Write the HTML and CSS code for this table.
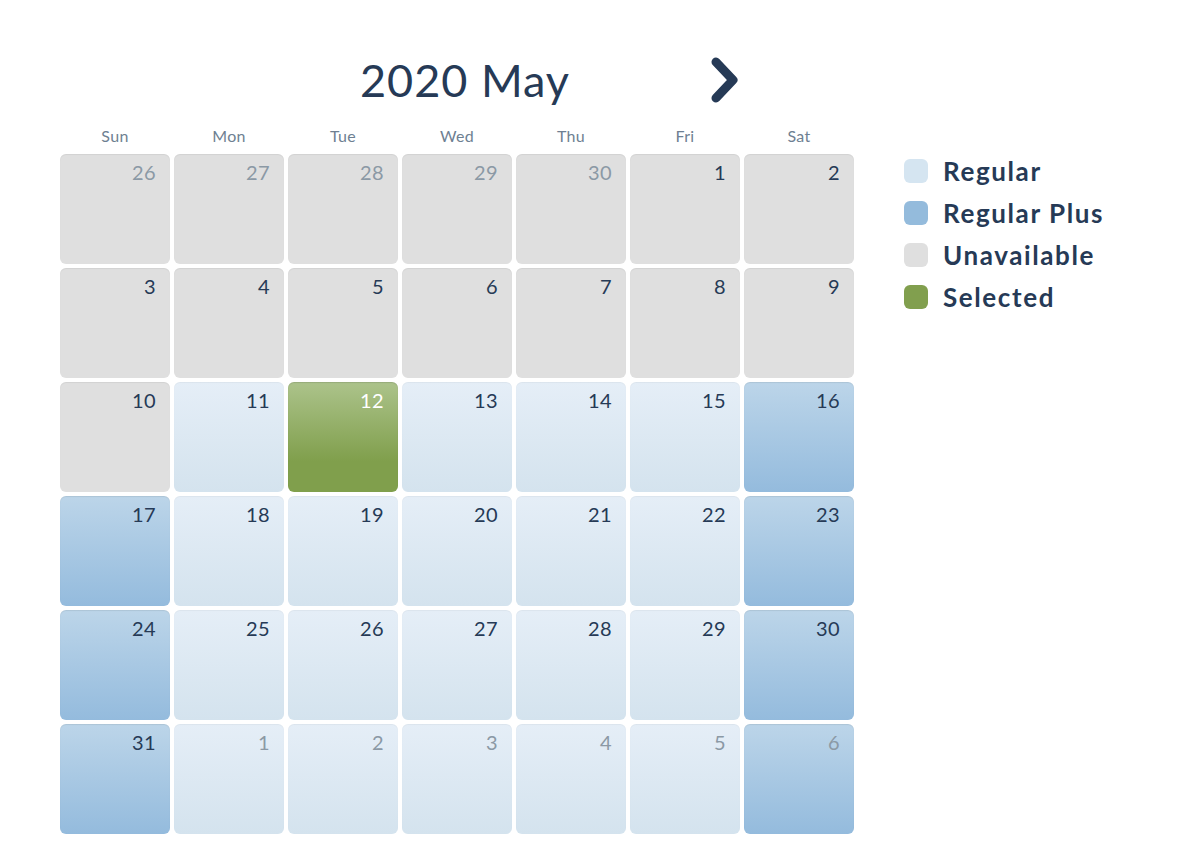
FILE: index.html
```html
<!DOCTYPE html>
<html>
<head>
<meta charset="utf-8">
<link rel="stylesheet" href="styles.css">
</head>
<body>
<div class="page">
  <div class="calendar">
    <div class="head">
      <h1 class="title">2020 May</h1>
      <button class="next" aria-label="Next month">
        <svg width="30" height="46" viewBox="0 0 30 46"><polyline points="6,5 23,23 6,41" fill="none" stroke="#263a56" stroke-width="9" stroke-linecap="round" stroke-linejoin="round"/></svg>
      </button>
    </div>
    <div class="dows">
      <div>Sun</div><div>Mon</div><div>Tue</div><div>Wed</div><div>Thu</div><div>Fri</div><div>Sat</div>
    </div>
    <div class="grid">
      <div class="cell un out">26</div><div class="cell un out">27</div><div class="cell un out">28</div><div class="cell un out">29</div><div class="cell un out">30</div><div class="cell un">1</div><div class="cell un">2</div>
      <div class="cell un">3</div><div class="cell un">4</div><div class="cell un">5</div><div class="cell un">6</div><div class="cell un">7</div><div class="cell un">8</div><div class="cell un">9</div>
      <div class="cell un">10</div><div class="cell reg">11</div><div class="cell sel">12</div><div class="cell reg">13</div><div class="cell reg">14</div><div class="cell reg">15</div><div class="cell plus">16</div>
      <div class="cell plus">17</div><div class="cell reg">18</div><div class="cell reg">19</div><div class="cell reg">20</div><div class="cell reg">21</div><div class="cell reg">22</div><div class="cell plus">23</div>
      <div class="cell plus">24</div><div class="cell reg">25</div><div class="cell reg">26</div><div class="cell reg">27</div><div class="cell reg">28</div><div class="cell reg">29</div><div class="cell plus">30</div>
      <div class="cell plus">31</div><div class="cell reg out">1</div><div class="cell reg out">2</div><div class="cell reg out">3</div><div class="cell reg out">4</div><div class="cell reg out">5</div><div class="cell plus out">6</div>
    </div>
  </div>
  <ul class="legend">
    <li><span class="sw sw-reg"></span>Regular</li>
    <li><span class="sw sw-plus"></span>Regular Plus</li>
    <li><span class="sw sw-un"></span>Unavailable</li>
    <li><span class="sw sw-sel"></span>Selected</li>
  </ul>
</div>
</body>
</html>
```
FILE: styles.css
```css
html, body {
  margin: 0;
  padding: 0;
  background: #ffffff;
}
body {
  font-family: Lato, "Open Sans", sans-serif;
  color: #263a56;
}
.page {
  display: flex;
  align-items: flex-start;
  padding: 52px 0 0 60px;
}
.calendar {
  width: 794px;
}
.head {
  display: flex;
  align-items: center;
  height: 56px;
  padding-left: 300px;
}
.title {
  margin: 0;
  font-size: 45px;
  font-weight: 400;
  line-height: 56px;
  width: 350px;
  letter-spacing: 1px;
}
.next {
  border: 0;
  background: none;
  padding: 0;
  margin: 0;
  display: flex;
  filter: blur(0.6px);
}
.dows {
  display: grid;
  grid-template-columns: repeat(7, 110px);
  column-gap: 4px;
  margin-top: 16px;
  height: 30px;
  font-size: 16px;
  color: #6e7f92;
  text-align: center;
  line-height: 24px;
  letter-spacing: 0.3px;
}
.grid {
  display: grid;
  grid-template-columns: repeat(7, 110px);
  grid-auto-rows: 110px;
  gap: 4px;
}
.cell {
  border-radius: 6px;
  text-align: right;
  padding: 6px 14px 0 0;
  font-size: 20px;
  line-height: 24px;
  letter-spacing: 0.4px;
  color: #263a56;
  box-sizing: border-box;
}
.cell.un {
  background: #dfdfdf;
  box-shadow: inset 0 1px 1px rgba(0,0,0,0.06);
}
.cell.reg {
  background: linear-gradient(to bottom, #e5eef7, #d4e3ee);
  box-shadow: inset 0 1px 1px rgba(0,0,0,0.04);
}
.cell.plus {
  background: linear-gradient(to bottom, #bcd5e9, #94bbdd);
  box-shadow: inset 0 1px 1px rgba(0,0,0,0.08);
}
.cell.sel {
  background: linear-gradient(to bottom, #acc38b, #809f4c 72%);
  color: #ffffff;
  box-shadow: inset 0 1px 1px rgba(0,0,0,0.12);
}
.cell.out {
  color: #8b99a5;
}
.legend {
  list-style: none;
  margin: 98px 0 0 50px;
  padding: 0;
}
.legend li {
  display: flex;
  align-items: center;
  height: 42px;
  font-size: 26px;
  font-weight: 700;
  letter-spacing: 1.6px;
  color: #263a56;
}
.sw {
  width: 24px;
  height: 24px;
  border-radius: 6px;
  margin-right: 15px;
}
.sw-reg { background: #d5e5f1; }
.sw-plus { background: #94bbdc; }
.sw-un { background: #dfdfdf; }
.sw-sel { background: #819f4e; }
```
